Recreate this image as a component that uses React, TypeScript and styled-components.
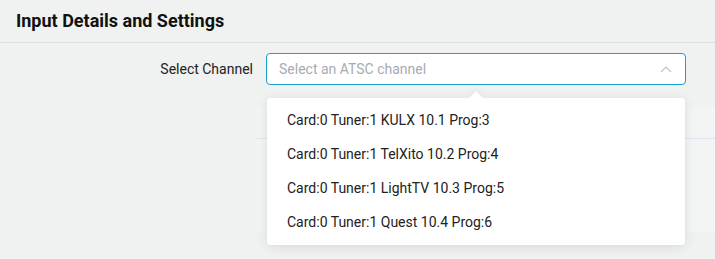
import React from "react";
import styled, { createGlobalStyle } from "styled-components";

const channels = [
  "Card:0 Tuner:1 KULX 10.1 Prog:3",
  "Card:0 Tuner:1 TelXito 10.2 Prog:4",
  "Card:0 Tuner:1 LightTV 10.3 Prog:5",
  "Card:0 Tuner:1 Quest 10.4 Prog:6",
];

const Global = createGlobalStyle`
  body {
    margin: 0;
    background: #f0f1f1;
    font-family: Roboto, "Liberation Sans", sans-serif;
  }
`;

const App = () => {
  return (
    <Page>
      <Global />
      <Header>
        <Title>Input Details and Settings</Title>
      </Header>
      <Body>
        <Row>
          <Label>Select Channel</Label>
          <SelectWrap>
            <Select>
              <Placeholder>Select an ATSC channel</Placeholder>
              <svg width="12" height="8" viewBox="0 0 12 8">
                <path d="M1 7 L6 2 L11 7" fill="none" stroke="#c0c4cc" strokeWidth="1.2" />
              </svg>
            </Select>
            <Menu>
              <Arrow />
              {channels.map((c) => (
                <Item key={c}>{c}</Item>
              ))}
            </Menu>
          </SelectWrap>
        </Row>
        <Section>
          <SectionHead />
        </Section>
      </Body>
    </Page>
  );
};

export default App;

const Page = styled.div`
  width: 715px;
  height: 259px;
  overflow: hidden;
`;

const Header = styled.div`
  height: 42px;
  padding-left: 16px;
  display: flex;
  align-items: center;
  border-bottom: 1px solid #dcdfe6;
`;

const Title = styled.div`
  font-size: 18px;
  font-weight: 700;
  color: #111;
  margin-top: -2px;
`;

const Body = styled.div`
  padding-top: 10px;
`;

const Row = styled.div`
  display: flex;
  align-items: center;
  gap: 13px;
`;

const Label = styled.div`
  width: 253px;
  text-align: right;
  font-size: 14px;
  color: #222;
`;

const SelectWrap = styled.div`
  position: relative;
  width: 420px;
`;

const Select = styled.div`
  height: 32px;
  box-sizing: border-box;
  border: 1px solid #1ba4c9;
  border-radius: 4px;
  background: #fff;
  display: flex;
  align-items: center;
  justify-content: space-between;
  padding: 0 13px 0 12px;
`;

const Placeholder = styled.span`
  font-size: 14px;
  color: #a8abb2;
`;

const Menu = styled.div`
  position: absolute;
  top: 45px;
  left: 1px;
  width: 418px;
  background: #fff;
  border-radius: 4px;
  box-shadow: 0 2px 12px rgba(0, 0, 0, 0.1);
  padding: 5px 0 6px;
  z-index: 5;
`;

const Arrow = styled.div`
  position: absolute;
  top: -5px;
  left: 204px;
  width: 10px;
  height: 10px;
  background: #fff;
  transform: rotate(45deg);
  box-shadow: -2px -2px 4px rgba(0, 0, 0, 0.04);
`;

const Item = styled.div`
  position: relative;
  height: 34px;
  line-height: 34px;
  padding-left: 20px;
  font-size: 14px;
  color: #222;
`;

const Section = styled.div`
  margin: 22px 0 0 257px;
  height: 125px;
  background: #f3f4f4;
`;

const SectionHead = styled.div`
  height: 31px;
  border-bottom: 1px solid #e2e2f0;
`;
